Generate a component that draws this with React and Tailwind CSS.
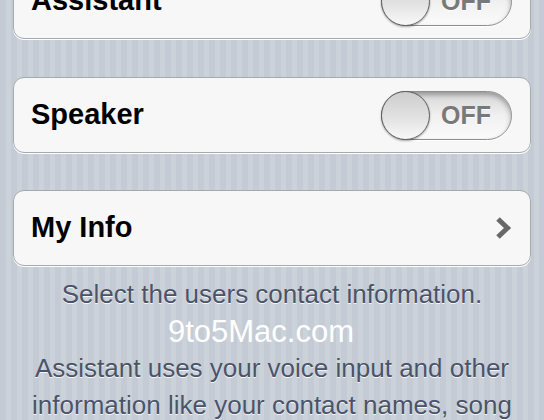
import React from "react";

function Toggle() {
  return (
    <div className="relative w-[131px] h-[49px] rounded-full border border-[#8e8e8e] bg-gradient-to-b from-[#d6d6d6] via-[#f0f0f0] to-[#fbfbfb] shadow-[inset_0_3px_5px_rgba(0,0,0,0.3),0_1px_0_#ffffff] flex items-center">
      <div className="absolute -left-px -top-px w-[49px] h-[49px] rounded-full border-[1.5px] border-[#5a5a5a] bg-gradient-to-b from-[#cdcdcd] via-[#e0e0e0] to-[#f8f8f8] shadow-[0_1px_2px_rgba(0,0,0,0.35)]" />
      <span className="ml-[59px] text-[25px] leading-none font-bold text-[#787878] [text-shadow:0_1px_0_#ffffff]">OFF</span>
    </div>
  );
}

function Card({ children, className = "" }) {
  return (
    <div className={"h-[76px] rounded-[11px] border border-[#a4a9b0] bg-[#f7f7f7] shadow-[0_1px_0_#ffffff] flex items-center justify-between pl-[17px] pr-[18px] " + className}>
      {children}
    </div>
  );
}

export default function App() {
  return (
    <div
      className="w-[544px] h-[420px] overflow-hidden bg-[repeating-linear-gradient(90deg,#c4cbd4_0px,#c4cbd4_6px,#cbd2d9_6px,#cbd2d9_11px)] px-[13px]"
      style={{ fontFamily: '"Liberation Sans", Arial, sans-serif' }}
    >
      <Card className="-mt-[37px]">
        <span className="text-[29px] font-bold text-black">Assistant</span>
        <Toggle />
      </Card>
      <Card className="mt-[38px]">
        <span className="text-[29px] font-bold text-black">Speaker</span>
        <Toggle />
      </Card>
      <Card className="mt-[37px]">
        <span className="text-[29px] font-bold text-black">My Info</span>
        <svg width="17" height="24" viewBox="0 0 17 24" className="mr-0">
          <polyline points="3,3 12.5,12 3,21" fill="none" stroke="#686868" strokeWidth="5" strokeLinecap="butt" strokeLinejoin="miter" />
        </svg>
      </Card>
      <div className="mt-[10px] text-center text-[26px] leading-[37px] text-[#4a5368] [text-shadow:0_1px_0_rgba(255,255,255,0.85)]">
        <div>Select the users contact information.</div>
        <div className="text-[31px] leading-[37px] text-white [text-shadow:none] pr-[22px]">9to5Mac.com</div>
        <div className="-mx-[13px] whitespace-nowrap">Assistant uses your voice input and other</div>
        <div className="-mx-[13px] whitespace-nowrap">information like your contact names, song</div>
      </div>
    </div>
  );
}
